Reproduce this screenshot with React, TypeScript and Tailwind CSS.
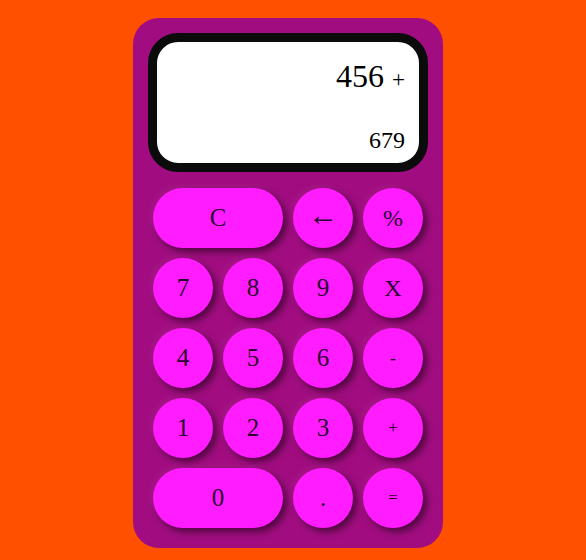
import React from "react";

type Key = { label: string; wide?: boolean; size: string };

const keys: Key[] = [
  { label: "C", wide: true, size: "text-[25px]" },
  { label: "←", size: "text-[30px] pb-[8px]" },
  { label: "%", size: "text-[24px]" },
  { label: "7", size: "text-[25px]" },
  { label: "8", size: "text-[25px]" },
  { label: "9", size: "text-[25px]" },
  { label: "X", size: "text-[24px]" },
  { label: "4", size: "text-[25px]" },
  { label: "5", size: "text-[25px]" },
  { label: "6", size: "text-[25px]" },
  { label: "-", size: "text-[18px]" },
  { label: "1", size: "text-[25px]" },
  { label: "2", size: "text-[25px]" },
  { label: "3", size: "text-[25px]" },
  { label: "+", size: "text-[17px]" },
  { label: "0", wide: true, size: "text-[25px]" },
  { label: ".", size: "text-[25px]" },
  { label: "=", size: "text-[17px]" },
];

export default function App() {
  return (
    <div
      className="min-h-[560px] w-full bg-[#ff5000] pt-[18px] pl-[133px]"
      style={{ fontFamily: '"Liberation Serif", "DejaVu Serif", serif' }}
    >
      <div className="flex h-[530px] w-[310px] flex-col items-center rounded-[26px] bg-[#a10d80] pt-[15px]">
        <div className="flex h-[139px] w-[280px] flex-col items-end rounded-[30px] border-[9px] border-[#0b0b0b] bg-white pr-[14px] text-black">
          <div className="mt-[18px] text-[32px] leading-[32px]">
            456 <span className="text-[23px]">+</span>
          </div>
          <div className="mt-[32px] text-[24px] leading-[24px]">679</div>
        </div>
        <div className="mt-[16px] grid w-[270px] grid-cols-4 gap-[10px]">
          {keys.map((k) => (
            <div
              key={k.label}
              className={`flex h-[60px] items-center justify-center rounded-full bg-[#ff1cff] text-[#2a0530] shadow-[4px_4px_7px_rgba(0,0,0,0.5),-2px_-2px_6px_rgba(255,255,255,0.06)] ${
                k.wide ? "col-span-2" : ""
              } ${k.size}`}
            >
              {k.label}
            </div>
          ))}
        </div>
      </div>
    </div>
  );
}
